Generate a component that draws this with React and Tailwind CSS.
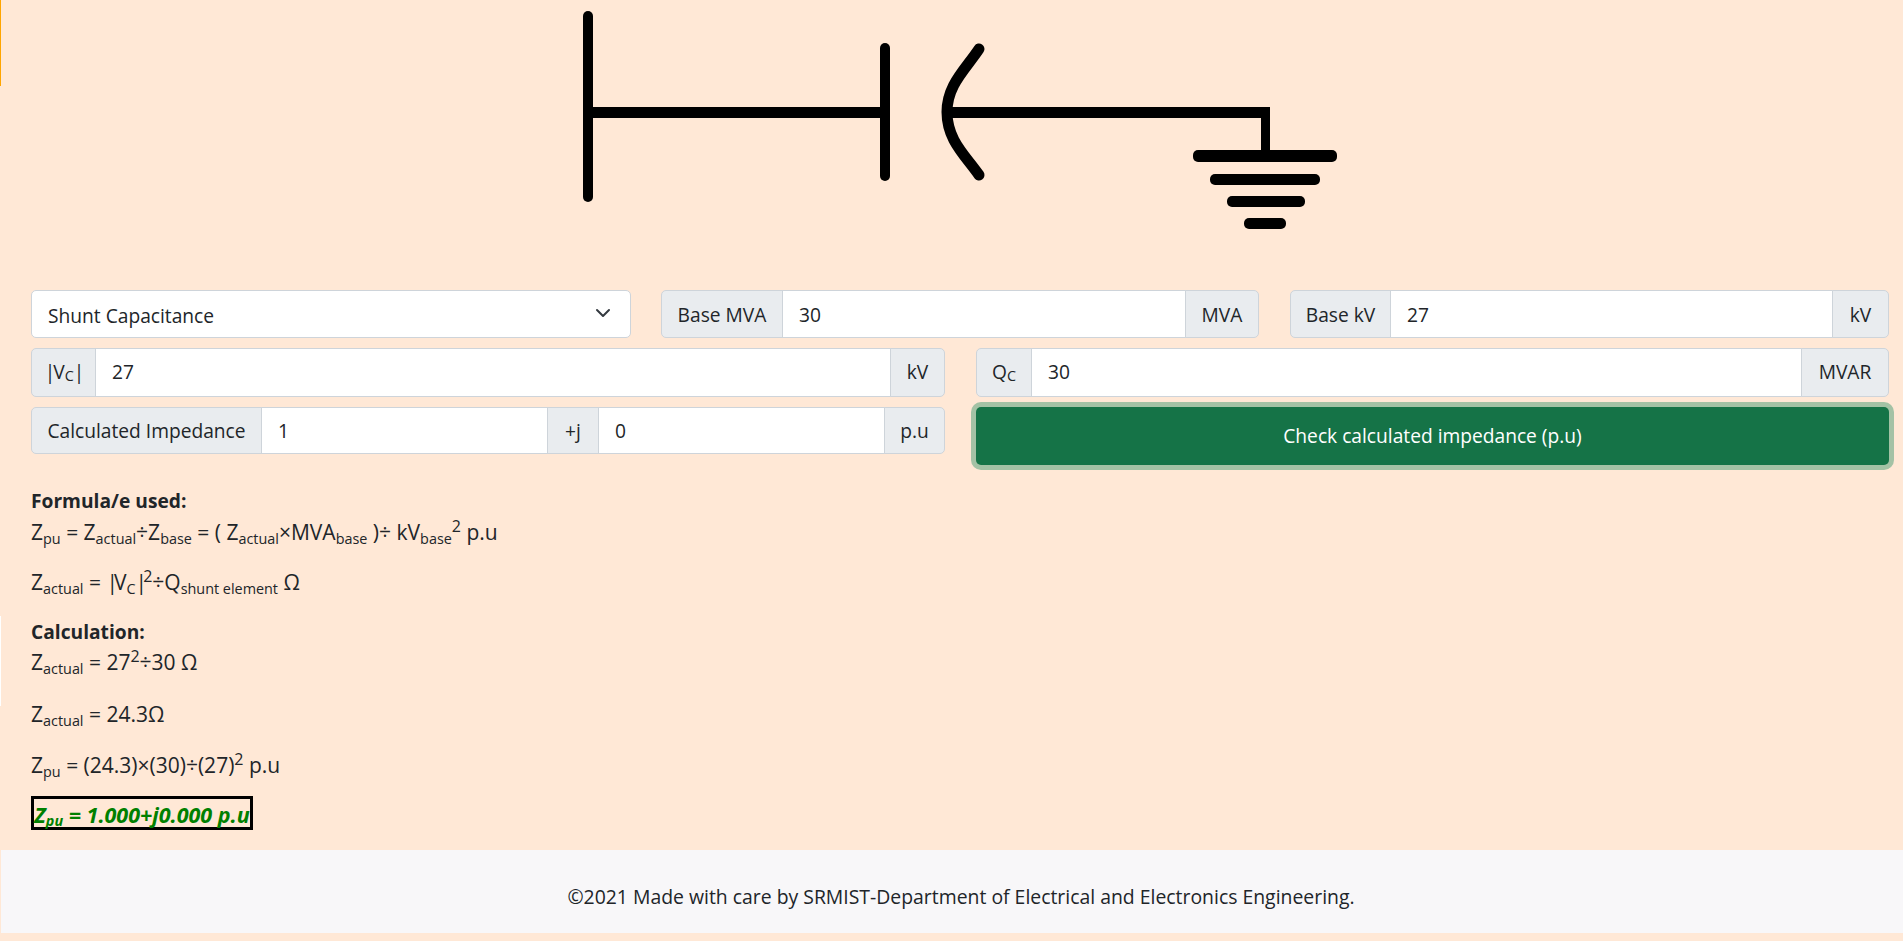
import React from 'react';

const Addon = ({ className = '', children }) => (
  <span className={`flex items-center justify-center bg-[#e9ecef] border border-[#ced4da] -ml-px first:ml-0 first:rounded-l-[5px] last:rounded-r-[5px] whitespace-nowrap ${className}`}>
    {children}
  </span>
);

const Field = ({ value, className = '' }) => (
  <input
    readOnly
    value={value}
    className={`min-w-0 bg-white border border-[#ced4da] -ml-px px-[16px] text-[#212529] outline-none ${className}`}
  />
);

const Sub = ({ children }) => <sub className="text-[14.4px]">{children}</sub>;
const Sup = ({ children }) => <sup className="text-[16px]">{children}</sup>;

// circuit drawing: bus, capacitor plates and earth
const Diagram = () => (
  <svg width="1903" height="229" viewBox="0 0 1903 229" className="block">
    <g fill="none" stroke="#000" strokeLinecap="round">
      <path d="M588 16V197" strokeWidth="10" />
      <path d="M885 48V176" strokeWidth="10" />
      <path d="M979 49C965 70 947 85 947 112C947 140 965 155 979 175" strokeWidth="11" />
    </g>
    <rect x="588" y="107" width="297" height="11" />
    <rect x="948" y="107" width="322" height="11" rx="2" />
    <rect x="1261" y="107" width="9" height="46" />
    <rect x="1193" y="150" width="144" height="12" rx="5" />
    <rect x="1210" y="174" width="110" height="11" rx="5" />
    <rect x="1227" y="196" width="78" height="11" rx="5" />
    <rect x="1244" y="218" width="42" height="11" rx="5" />
  </svg>
);

const App = () => {
  return (
    <div className="relative min-h-[941px] bg-[#ffe8d6] text-[#212529] text-[19.2px] font-['Open_Sans','Liberation_Sans',sans-serif] pb-[8px]">
      {/* stray edges on the left of the page */}
      <div className="absolute left-0 top-0 w-px h-[86px] bg-[#ffa500]" />
      <div className="absolute left-0 top-[616px] w-px h-[90px] bg-white" />

      <Diagram />

      <div className="px-[31px] pr-[13px] pt-[61px]">
        <div className="grid grid-cols-[600px_598px_600px] gap-x-[30px] h-[48px]">
          <div className="relative">
            <select className="w-full h-full appearance-none bg-white border border-[#ced4da] rounded-[5px] px-[16px] pt-[4px] outline-none">
              <option>Shunt Capacitance</option>
            </select>
            <svg viewBox="0 0 16 16" className="absolute right-[20px] top-[15px] w-[16px] h-[16px]" fill="none" stroke="#343a40" strokeWidth="2" strokeLinecap="round" strokeLinejoin="round">
              <path d="M2 5l6 6 6-6" />
            </svg>
          </div>
          <div className="flex">
            <Addon className="w-[122px] pt-[2px]">Base MVA</Addon>
            <Field value="30" className="flex-1 pt-[2px]" />
            <Addon className="w-[74px] pt-[2px]">MVA</Addon>
          </div>
          <div className="flex ml-px">
            <Addon className="w-[101px] pt-[2px]">Base kV</Addon>
            <Field value="27" className="flex-1 pt-[2px]" />
            <Addon className="w-[57px] pt-[2px]">kV</Addon>
          </div>
        </div>

        <div className="grid grid-cols-[914px_913px] gap-x-[31px] mt-[10px] h-[49px]">
          <div className="flex">
            <Addon className="w-[65px]"><span className="tracking-[-2px]">|</span>V<sub className="text-[14.4px]">C</sub><span className="tracking-[-2px]">|</span></Addon>
            <Field value="27" className="flex-1" />
            <Addon className="w-[55px]">kV</Addon>
          </div>
          <div className="flex">
            <Addon className="w-[56px]">Q<sub className="text-[14.4px]">C</sub></Addon>
            <Field value="30" className="flex-1" />
            <Addon className="w-[88px]">MVAR</Addon>
          </div>
        </div>

        <div className="grid grid-cols-[914px_913px] gap-x-[31px] mt-[10px] h-[58px] items-start">
          <div className="flex h-[47px]">
            <Addon className="w-[231px] pt-px">Calculated Impedance</Addon>
            <Field value="1" className="w-[287px] pt-px" />
            <Addon className="w-[52px] pt-px">+j</Addon>
            <Field value="0" className="flex-1 pt-px" />
            <Addon className="w-[61px] pt-px">p.u</Addon>
          </div>
          <button className="h-[58px] pt-px rounded-[5px] bg-[#157347] text-white ring-[5px] ring-[#a3c2a5]">
            Check calculated impedance (p.u)
          </button>
        </div>

        <div className="mt-[21px] leading-[30px]">
          <div className="font-bold">Formula/e used:</div>
          <p className="mt-px mb-[20px] text-[21px]">
            Z<Sub>pu</Sub> = Z<Sub>actual</Sub>÷Z<Sub>base</Sub> = ( Z<Sub>actual</Sub>×MVA<Sub>base</Sub> )÷ kV<Sub>base</Sub><Sup>2</Sup> p.u
          </p>
          <p className="mb-[20px] text-[21px]">
            Z<Sub>actual</Sub> = <span className="tracking-[-4px]">|</span>V<Sub>C</Sub><span className="tracking-[-4px]">|</span><Sup>2</Sup>÷Q<Sub>shunt element</Sub> Ω
          </p>
          <div className="font-bold">Calculation:</div>
          <p className="mb-[22px] text-[21px]">
            Z<Sub>actual</Sub> = 27<Sup>2</Sup>÷30 Ω
          </p>
          <p className="mb-[21px] text-[21px]">
            Z<Sub>actual</Sub> = 24.3Ω
          </p>
          <p className="mb-[16px] text-[21px]">
            Z<Sub>pu</Sub> = (24.3)×(30)÷(27)<Sup>2</Sup> p.u
          </p>
          <div className="w-[222px] h-[34px] pt-[3px] border-[3px] border-black flex items-center justify-center font-bold italic text-[21.5px] text-[#008000] whitespace-nowrap leading-none">
            <span>Z<Sub>pu</Sub> = 1.000+j0.000 p.u</span>
          </div>
        </div>
      </div>

      <footer className="ml-px mt-[20px] h-[83px] pt-[10px] pl-[18px] text-[19.4px] bg-[#f8f7f9] flex items-center justify-center">
        ©2021 Made with care by SRMIST-Department of Electrical and Electronics Engineering.
      </footer>
    </div>
  );
};

export default App;
